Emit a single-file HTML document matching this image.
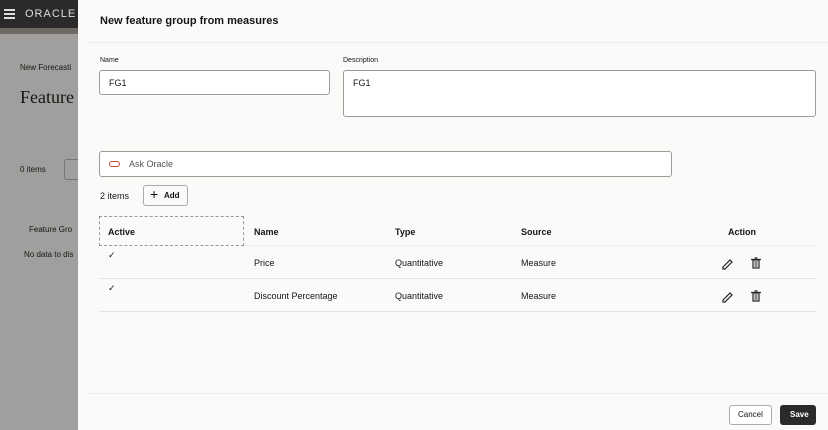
<!DOCTYPE html>
<html><head><meta charset="utf-8"><style>
*{box-sizing:border-box;margin:0;padding:0}
body{width:828px;height:430px;overflow:hidden;font-family:"Liberation Sans",sans-serif;color:#161513;position:relative;background:#a5a4a2}
.abs{position:absolute}
.bg{left:0;top:0;width:78px;height:430px;background:#a09f9d}
.topbar{left:0;top:0;width:78px;height:28px;background:#2b2a28}
.strip{left:0;top:28px;width:78px;height:6px;background:#6e6a63}
.panel{left:78px;top:0;width:750px;height:430px;background:#fcfaf9}
.box{background:#fff;border:1px solid #9e9c99;border-radius:3px}
.hd{font-size:9px;font-weight:bold}
.row{font-size:9px}
.line{height:1px;background:#e4e2e0}
</style></head><body>
<div class="abs bg"></div>
<div class="abs topbar"></div>
<div class="abs strip"></div>
<div class="abs" style="left:4px;top:9px;width:11px;height:1.5px;background:#ddd;box-shadow:0 4px 0 #ddd,0 8px 0 #ddd"></div>
<div class="abs" style="left:25px;top:8px;color:#ddd;font-size:11px;letter-spacing:1px">ORACLE</div>
<div class="abs" style="left:20px;top:63px;font-size:8px">New Forecasti</div>
<div class="abs" style="left:20px;top:87px;font-size:18px;font-family:'Liberation Serif',serif">Feature</div>
<div class="abs" style="left:20px;top:165px;font-size:8px">0 items</div>
<div class="abs" style="left:64px;top:159px;width:20px;height:21px;border:1px solid #777;border-radius:3px"></div>
<div class="abs" style="left:29px;top:225px;font-size:8px">Feature Gro</div>
<div class="abs" style="left:24px;top:250px;font-size:8px">No data to dis</div>

<div class="abs panel"></div>
<div class="abs" style="left:100px;top:15px;font-size:11px;font-weight:bold">New feature group from measures</div>
<div class="abs line" style="left:86px;top:42px;width:742px;background:#efedeb"></div>
<div class="abs" style="left:100px;top:57px;font-size:7px">Name</div>
<div class="abs box" style="left:99px;top:70px;width:231px;height:25px"></div>
<div class="abs" style="left:109px;top:78px;font-size:9px">FG1</div>
<div class="abs" style="left:343px;top:57px;font-size:7px">Description</div>
<div class="abs box" style="left:343px;top:70px;width:473px;height:47px"></div>
<div class="abs" style="left:353px;top:78px;font-size:9px">FG1</div>
<div class="abs box" style="left:99px;top:151px;width:573px;height:26px"></div>
<div class="abs" style="left:109px;top:161px;width:11px;height:6px;border:1.5px solid #c74634;border-radius:3px"></div>
<div class="abs" style="left:129px;top:159px;font-size:9px;color:#555">Ask Oracle</div>
<div class="abs" style="left:100px;top:191px;font-size:9px">2 items</div>
<div class="abs box" style="left:143px;top:185px;width:45px;height:21px;background:#fcfaf9;border-color:#aaa"></div>
<div class="abs" style="left:150px;top:187px;font-size:14px;line-height:14px">+</div>
<div class="abs" style="left:164px;top:191px;font-size:8px;font-weight:bold">Add</div>
<div class="abs" style="left:99px;top:216px;width:145px;height:30px;border:1px dashed #999"></div>
<div class="abs hd" style="left:108px;top:227px">Active</div>
<div class="abs hd" style="left:254px;top:227px">Name</div>
<div class="abs hd" style="left:395px;top:227px">Type</div>
<div class="abs hd" style="left:521px;top:227px">Source</div>
<div class="abs hd" style="left:728px;top:227px">Action</div>
<div class="abs line" style="left:244px;top:245px;width:572px;background:#f0eeec"></div>
<div class="abs row" style="left:108px;top:250px">✓</div>
<div class="abs row" style="left:254px;top:258px">Price</div>
<div class="abs row" style="left:395px;top:258px">Quantitative</div>
<div class="abs row" style="left:521px;top:258px">Measure</div>
<div class="abs line" style="left:99px;top:278px;width:717px"></div>
<div class="abs row" style="left:108px;top:283px">✓</div>
<div class="abs row" style="left:254px;top:291px">Discount Percentage</div>
<div class="abs row" style="left:395px;top:291px">Quantitative</div>
<div class="abs row" style="left:521px;top:291px">Measure</div>
<div class="abs line" style="left:99px;top:311px;width:717px"></div>
<svg class="abs" style="left:720px;top:256px" width="46" height="46" viewBox="0 0 46 46"><g fill="none" stroke="#222" stroke-width="1.2"><path d="M3 11 L10 4 L12 6 L5 13 L3 13 Z"/><rect x="33" y="4" width="6" height="8"/><path d="M31 3.5h10M34.5 2h3"/></g><rect x="34.5" y="5" width="3" height="6" fill="#888"/></svg>
<svg class="abs" style="left:720px;top:289px" width="46" height="46" viewBox="0 0 46 46"><g fill="none" stroke="#222" stroke-width="1.2"><path d="M3 11 L10 4 L12 6 L5 13 L3 13 Z"/><rect x="33" y="4" width="6" height="8"/><path d="M31 3.5h10M34.5 2h3"/></g><rect x="34.5" y="5" width="3" height="6" fill="#888"/></svg>
<div class="abs line" style="left:86px;top:393px;width:742px;background:#efedeb"></div>
<div class="abs box" style="left:729px;top:405px;width:43px;height:20px;background:#fff;border-color:#aaa"></div>
<div class="abs" style="left:738px;top:410px;font-size:8px">Cancel</div>
<div class="abs" style="left:780px;top:405px;width:36px;height:20px;background:#2b2a28;border-radius:3px"></div>
<div class="abs" style="left:790px;top:410px;font-size:8px;color:#fff;font-weight:bold">Save</div>
</body></html>
